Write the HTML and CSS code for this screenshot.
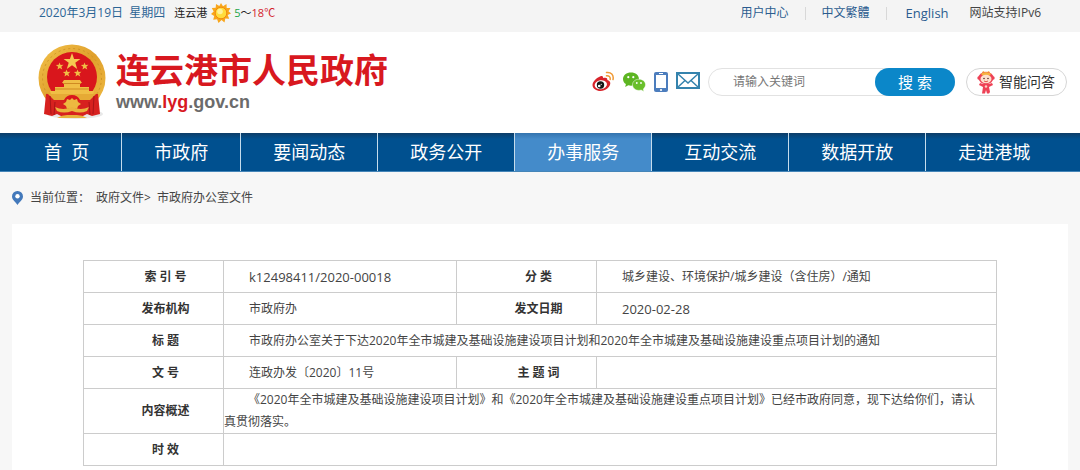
FILE: index.html
```html
<!DOCTYPE html>
<html lang="zh-CN">
<head>
  <meta charset="UTF-8" />
  <meta name="viewport" content="width=device-width, initial-scale=1.0"/>
  <title>连云港市人民政府</title>
  <link rel="stylesheet" href="styles.css">
</head>
<body>
  <div class="topbar">
    <div class="today">
      <span class="date">2020年3月19日&nbsp; 星期四</span>
      <span class="city">连云港</span>
      <svg class="sun" viewBox="0 0 20 20">
        <path d="M10 0l2 3.3L15.5 1l.2 4L19.5 5l-2 3.2L20 10.500l-3.300 1.600 1.500 3.600-3.900-.1L13.500 19.500 10.500 17 7.500 20l-1.400-3.800-3.900.6 1-3.800L0 11l2.700-2.600L.8 5l3.900-.2L5 1l3.300 2z" fill="#f9a61a"/>
        <circle cx="10" cy="10" r="5.800" fill="#ffdc3c" stroke="#f08a12"/>
        <circle cx="9" cy="8.500" r="2.800" fill="#fff29a"/>
      </svg>
      <span class="temp"><span class="low">5</span>～<span class="high">18℃</span></span>
    </div>
    <div class="toplinks">
      <a href="#">用户中心</a>
      <i class="sep"></i>
      <a href="#">中文繁體</a>
      <i class="sep"></i>
      <a href="#" class="en">English</a>
      <span class="ipv6">网站支持IPv6</span>
    </div>
  </div>

  <header class="header">
    <a href="#" class="brand">
      <svg class="emblem" viewBox="0 0 68 76">
        <defs>
          <linearGradient id="gold" x1="0" y1="0" x2="1" y2="1">
            <stop offset="0" stop-color="#f2c24a"/>
            <stop offset="0.5" stop-color="#e0a02c"/>
            <stop offset="1" stop-color="#f0bd45"/>
          </linearGradient>
        </defs>
        <ellipse cx="37" cy="70" rx="28" ry="5" fill="#e8e8e8"/>
        <circle cx="34" cy="34" r="33.500" fill="url(#gold)"/>
        <circle cx="34" cy="34" r="29.500" fill="none" stroke="#cf9426" stroke-dasharray="2 3"/>
        <path d="M8 50h52l2 20-8 2-5-2-6 3H25l-6-3-5 2-8-2z" fill="#d7211f"/>
        <circle cx="34" cy="33" r="25" fill="#d9161c"/>
        <path d="M34 9l2.100 6h6.300l-5.100 3.800 1.900 6.100-5.200-3.700-5.200 3.700 1.900-6.100-5.100-3.800h6.300z" fill="#f5c951"/>
        <g fill="#f0be45">
          <path id="star" d="M21.500 18.500l1.100 2.500 2.800-.2-2.100 1.900 1 2.700-2.500-1.400-2.300 1.600.6-2.800-2.200-1.700 2.800-.3z"/>
          <use href="#star" x="25"/>
          <use href="#star" x="7" y="7"/>
          <use href="#star" x="18" y="7"/>
          <path d="M26 36h16l2 3h-2v4h9v4h5l-1 4H13l-1-4h5v-4h9v-4h-2z"/>
        </g>
        <path d="M25 39.500h18M17 45h34" stroke="#cf8a22"/>
        <path d="M10 50h48l-6 6H42a9 9 0 0 0-16 0H16z" fill="#e6aa35"/>
        <path d="M25 60l3-2 1-3 3 1 2-2 2 2 3-1 1 3 3 2-3 2-1 3-3-1-2 2-2-2-3 1-1-3z" fill="#edb940"/>
        <path d="M17 63q8 4 17 0 9 4 17 0l-2 4q-7 3-15 0-8 3-15 0z" fill="#eab43e"/>
        <path d="M12 52l1 18M17 58l-1 13M56 52l-1 18M51 58l1 13" stroke="#a91417" fill="none"/>
        <path d="M19 74q5-3 10-3h10q5 0 10 3z" fill="#e8b23c"/>
      </svg>
      <span class="brand-text">
        <strong>连云港市人民政府</strong>
        <span class="domain">www.<b>lyg</b>.gov.cn</span>
      </span>
    </a>

    <div class="tools">
      <a href="#" class="icon" aria-label="微博">
        <svg width="22" height="22" viewBox="0 0 22 22">
          <path d="M8.500 5.200c1.700-.7 2.900.1 2.600 1.900 2.300-.8 4.600-.6 4.200 1.900 1.800.6 3 1.500 3 3.300 0 3.600-4.700 7.700-9.800 7.700C4.300 20 .5 17.600.5 14c0-3.300 4-7.300 8-8.800z" fill="#d8232a"/>
          <ellipse cx="8.800" cy="13.700" rx="6.200" ry="4.500" fill="#fff" transform="rotate(-8 8.800 13.700)"/>
          <circle cx="8.500" cy="14" r="3.700" fill="#161616"/>
          <circle cx="7.200" cy="15" r="1.300" fill="#fff"/>
          <circle cx="9.200" cy="13.300" r=".6" fill="#fff"/>
          <path d="M14.500 4.800c2.500-.3 4 1.200 3.700 3.600M14.500 1.500c4.500-.7 7.500 2.500 6.500 7" fill="none" stroke="#f09a35" stroke-width="1.500" stroke-linecap="round"/>
        </svg>
      </a>
      <a href="#" class="icon" aria-label="微信">
        <svg width="24" height="22" viewBox="0 0 24 22">
          <path d="M9 1.500c4.500 0 8 2.700 8 6.500s-3.500 6.700-8 6.700c-1 0-1.800-.1-2.700-.4L3.200 16l.7-2.900C2.100 12 1 10.200 1 8c0-3.800 3.500-6.500 8-6.500z" fill="#5db522"/>
          <path d="M17 8.200c3.700 0 6.500 2.300 6.500 5.600 0 1.700-.9 3.200-2.200 4.200l.5 2.500-2.600-1.400c-.7.200-1.400.3-2.200.3-3.700 0-6.500-2.400-6.500-5.600s2.800-5.600 6.500-5.600z" fill="#69bf2b" stroke="#fff" stroke-width=".5"/>
          <g fill="#fff"><circle cx="6.300" cy="6.200" r="1.100"/><circle cx="11.300" cy="6.200" r="1.100"/><circle cx="14.800" cy="12" r=".9"/><circle cx="19" cy="12" r=".9"/></g>
        </svg>
      </a>
      <a href="#" class="icon" aria-label="手机版">
        <svg width="14" height="22" viewBox="0 0 14 22">
          <rect y="1" width="14" height="20" rx="2" fill="#4c7dbd"/>
          <rect x="2" y="4" width="10" height="13" fill="#fff"/>
          <path d="M5 2.500h4" stroke="#fff"/>
          <circle cx="7" cy="19" r="1.100" fill="#fff"/>
        </svg>
      </a>
      <a href="#" class="icon" aria-label="邮箱">
        <svg width="24" height="22" viewBox="0 0 24 22">
          <path d="M1 2h22v15H1z" fill="#fff" stroke="#3583ad" stroke-width="2"/>
          <path d="M2 3l10 9L22 3M2 16l7-6.500M22 16l-7-6.500" fill="none" stroke="#3583ad" stroke-width="1.500"/>
        </svg>
      </a>
      <form class="search">
        <input type="text" placeholder="请输入关键词" aria-label="请输入关键词">
        <button type="submit">搜 索</button>
      </form>
      <a href="#" class="qa">
        <svg width="18" height="24" viewBox="0 0 18 24">
          <path d="M5 3l1-2 3 1.500L12 1l1 2z" fill="#f5a93a"/>
          <circle cx="2" cy="8" r="1.700" fill="#ee4155"/>
          <circle cx="16" cy="8" r="1.700" fill="#ee4155"/>
          <ellipse cx="9" cy="8" rx="7.500" ry="6.200" fill="#ee4155"/>
          <path d="M4 3.500q5-3 10 0l-1 2H5z" fill="#f6b13f"/>
          <ellipse cx="9" cy="9" rx="5.500" ry="4.200" fill="#fde0cc"/>
          <circle cx="7" cy="8.500" r=".8" fill="#5a2a2a"/><circle cx="11" cy="8.500" r=".8" fill="#5a2a2a"/>
          <path d="M7 11q2 1.500 4 0" stroke="#d33" stroke-width=".8" fill="none"/>
          <path d="M6 14h6l3-1 1 2-4 2 1 5-1 1.500H10L9 20l-1 3.500H5L6 17l-4-2 1-2z" fill="#ee4155"/>
          <circle cx="9" cy="16.500" r="1.200" fill="#fbd0c4"/>
        </svg>
        <span>智能问答</span>
      </a>
    </div>
  </header>

  <nav class="nav">
    <a href="#">首&nbsp;&nbsp;页</a>
    <a href="#">市政府</a>
    <a href="#">要闻动态</a>
    <a href="#">政务公开</a>
    <a href="#" class="active">办事服务</a>
    <a href="#">互动交流</a>
    <a href="#">数据开放</a>
    <a href="#">走进港城</a>
  </nav>

  <div class="crumbs">
    <svg width="11" height="14" viewBox="0 0 11 14">
      <path d="M5.500 0A5.400 5.400 0 0 1 11 5.400C11 9 7 11 5.500 14 4 11 0 9 0 5.400A5.400 5.400 0 0 1 5.500 0z" fill="#4379bb"/>
      <circle cx="5.500" cy="5.300" r="2.200" fill="#fff"/>
    </svg>
    <span>当前位置：</span>
    <a href="#">政府文件&gt;</a>
    <a href="#">市政府办公室文件</a>
  </div>

  <main class="panel">
    <table class="info">
      <colgroup>
        <col class="col-label"><col class="col-value"><col class="col-label"><col>
      </colgroup>
      <tbody>
        <tr>
          <th scope="row">索 引 号</th>
          <td class="num">k12498411/2020-00018</td>
          <th scope="row">分 类</th>
          <td>城乡建设、环境保护/城乡建设（含住房）/通知</td>
        </tr>
        <tr>
          <th scope="row">发布机构</th>
          <td>市政府办</td>
          <th scope="row">发文日期</th>
          <td class="num">2020-02-28</td>
        </tr>
        <tr>
          <th scope="row">标 题</th>
          <td colspan="3">市政府办公室关于下达2020年全市城建及基础设施建设项目计划和2020年全市城建及基础设施建设重点项目计划的通知</td>
        </tr>
        <tr>
          <th scope="row">文 号</th>
          <td>连政办发〔2020〕11号</td>
          <th scope="row">主 题 词</th>
          <td></td>
        </tr>
        <tr>
          <th scope="row">内容概述</th>
          <td colspan="3" class="summary">《2020年全市城建及基础设施建设项目计划》和《2020年全市城建及基础设施建设重点项目计划》已经市政府同意，现下达给你们，请认真贯彻落实。</td>
        </tr>
        <tr>
          <th scope="row">时 效</th>
          <td colspan="3"></td>
        </tr>
      </tbody>
    </table>
  </main>
</body>
</html>
```
FILE: styles.css
```css
* {
  box-sizing: border-box;
}
html, body {
  height: 100%;
}
body {
  margin: 0;
  display: flex;
  flex-direction: column;
  background: #f7f7f7;
  color: #444;
  font-family: "Open Sans", "Noto Sans CJK SC", sans-serif;
  font-size: 12px;
  line-height: 22px;
}
a {
  color: inherit;
  text-decoration: none;
}
svg {
  display: block;
}

/* top bar */
.topbar {
  display: flex;
  flex-shrink: 0;
  justify-content: space-between;
  height: 32px;
  padding: 0 39px 6px;
  background: #f4f4f4;
}
.today, .toplinks {
  display: flex;
  align-items: center;
}
.date {
  color: #2c6596;
  margin-right: 9px;
}
.city {
  color: #222;
  font-size: 11px;
  margin-right: 4px;
}
.sun {
  width: 20px;
  height: 20px;
  margin-right: 3px;
}
.temp {
  color: #222;
  font-size: 11px;
}
.low {
  color: #1ba548;
}
.high {
  color: #d3222b;
}
.toplinks a {
  color: #2b5c8f;
}
.sep {
  width: 1px;
  height: 13px;
  margin: 0 16px;
  background: #d8d8d8;
}
.toplinks .en {
  font-size: 13px;
  margin: 0 21px 0 3px;
}

/* header */
.header {
  display: flex;
  flex-shrink: 0;
  align-items: center;
  justify-content: space-between;
  height: 101px;
  padding: 0 13px 2px 38px;
  background: #fff;
}
.brand {
  display: flex;
  align-items: center;
  gap: 10px;
}
.emblem {
  width: 68px;
  height: 76px;
}
.brand-text {
  display: flex;
  flex-direction: column;
}
.brand strong {
  color: #d8181f;
  font-family: "Liberation Sans", "Noto Sans CJK SC", sans-serif;
  font-size: 34px;
  line-height: 40px;
}
.domain {
  color: #6b6b6b;
  font: bold 18px/22px "Liberation Sans", Arial, sans-serif;
}
.domain b {
  color: #d8181f;
}
.tools {
  display: flex;
  align-items: center;
  gap: 8px;
}
.search {
  display: flex;
  width: 247px;
  height: 28px;
  border: 1px solid #e2e2e2;
  border-radius: 14px;
}
.search input {
  flex: 1;
  min-width: 0;
  padding: 0 0 0 24px;
  border: none;
  outline: none;
  background: none;
  font: inherit;
}
.search input::placeholder {
  color: #777;
}
.search button {
  width: 80px;
  margin: -1px;
  border: none;
  border-radius: 14px;
  background: #0b87c9;
  color: #fff;
  font: inherit;
  font-size: 15px;
  cursor: pointer;
}
.qa {
  display: flex;
  align-items: center;
  gap: 4px;
  height: 28px;
  margin-left: 3px;
  padding: 0 11px 0 10px;
  border: 1px solid #d6d6d6;
  border-radius: 14px;
  color: #333;
  font-size: 14px;
}

/* main menu */
.nav {
  display: flex;
  flex-shrink: 0;
  padding-left: 12px;
  background: linear-gradient(#0d3d68, #00508f 6px);
  border-bottom: 1px solid #4585b8;
}
.nav a {
  padding: 0 32px;
  border-right: 1px solid #c5dcec;
  color: #fff;
  font-size: 18px;
  line-height: 38px;
  white-space: nowrap;
}
.nav a:last-child {
  border-right: none;
}
.nav .active {
  background: linear-gradient(#3474ae, #448bca 6px);
}

/* breadcrumb */
.crumbs {
  display: flex;
  flex-shrink: 0;
  align-items: center;
  height: 52px;
  padding: 0 12px;
}
.crumbs svg {
  margin-right: 7px;
}
.crumbs a {
  margin-left: 6px;
}

/* document info */
.panel {
  flex: 1 0 auto;
  margin: 0 12px;
  padding: 36px 71px 0;
  background: #fff;
}
.info {
  width: 100%;
  table-layout: fixed;
  border-collapse: collapse;
}
.col-label {
  width: 140px;
}
.col-value {
  width: 233px;
}
.info th, .info td {
  height: 32px;
  padding: 0;
  border: 1px solid #ccc;
}
.info th {
  padding-left: 24px;
  color: #333;
  text-align: center;
}
.info td {
  padding-left: 25px;
  text-align: left;
}
.info .num {
  font-size: 13px;
}
.info .summary {
  padding: 0 12px 0 0;
  text-indent: 24px;
}
```
